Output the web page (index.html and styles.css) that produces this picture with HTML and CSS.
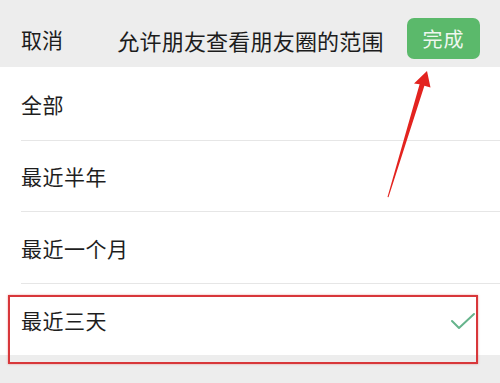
FILE: index.html
```html
<!DOCTYPE html>
<html lang="zh-CN">
<head>
<meta charset="utf-8">
<title>允许朋友查看朋友圈的范围</title>
<link rel="stylesheet" href="styles.css">
</head>
<body>
<div class="page">
  <header class="nav">
    <span class="cancel">取消</span>
    <span class="title">允许朋友查看朋友圈的范围</span>
    <span class="done-wrap"><button class="done">完成</button></span>
  </header>
  <ul class="list">
    <li class="row">全部</li>
    <li class="row">最近半年</li>
    <li class="row">最近一个月</li>
    <li class="row selected">最近三天
      <svg class="check" width="26" height="18" viewBox="0 0 26 18"><polyline points="2,9 9,16 24,2" fill="none" stroke="#66b48c" stroke-width="2" stroke-linecap="round" stroke-linejoin="round"/></svg>
    </li>
  </ul>
  <div class="highlight"></div>
  <svg class="arrow" width="500" height="383" viewBox="0 0 500 383">
    <polygon points="427,71 430.5,87.5 424.4,85.7 388.5,197.2 387.5,196.9 419.6,84.3 414,83.5" fill="#e3231f"/>
  </svg>
</div>
</body>
</html>
```
FILE: styles.css
```css
* { box-sizing: border-box; }
html, body {
  margin: 0;
  padding: 0;
  background: #ededed;
}
body {
  font-family: "Noto Sans CJK SC", "Noto Sans", sans-serif;
  color: #1a1a1a;
}
.page {
  position: relative;
  width: 500px;
  height: 383px;
  overflow: hidden;
  background: #ededed;
}
.nav {
  height: 67px;
  padding: 11px 20px 0 21px;
  display: grid;
  grid-template-columns: 1fr auto 1fr;
  align-items: center;
  background: #ededed;
}
.cancel {
  font-size: 21px;
  line-height: 1;
  color: #1c1c1c;
}
.title {
  font-size: 22px;
  letter-spacing: 0.2px;
  line-height: 1;
  color: #1c1c1c;
  margin-top: 2px;
}
.done-wrap {
  display: flex;
  justify-content: flex-end;
}
.done {
  width: 73px;
  height: 41px;
  border: none;
  border-radius: 7px;
  background: #5bb96b;
  color: #eef7ef;
  font-family: "Noto Sans CJK SC", "Noto Sans", sans-serif;
  font-size: 20px;
  letter-spacing: 1px;
  padding: 0;
  margin-top: -2px;
}
.list {
  list-style: none;
  margin: 0;
  padding: 0;
  background: #fff;
}
.row {
  display: flex;
  align-items: center;
  justify-content: space-between;
  height: 72px;
  padding: 0 22px 0 21px;
  font-size: 21px;
  letter-spacing: 0.5px;
  color: #1e1e1e;
  position: relative;
}
.row:first-child { height: 73px; }
.row:nth-child(2) { height: 71px; }
.row + .row { border-top: 1px solid #e6e6e6; }
.row + .row { margin-left: 21px; padding-left: 0; }
.check {
  margin-top: 2px;
  margin-right: 2px;
}
.highlight {
  position: absolute;
  left: 8px;
  top: 295px;
  width: 470px;
  height: 69px;
  border: 2px solid #d8373a;
  box-shadow: 0 0 2px rgba(216, 55, 58, 0.5);
}
.arrow {
  position: absolute;
  left: 0;
  top: 0;
}
```
